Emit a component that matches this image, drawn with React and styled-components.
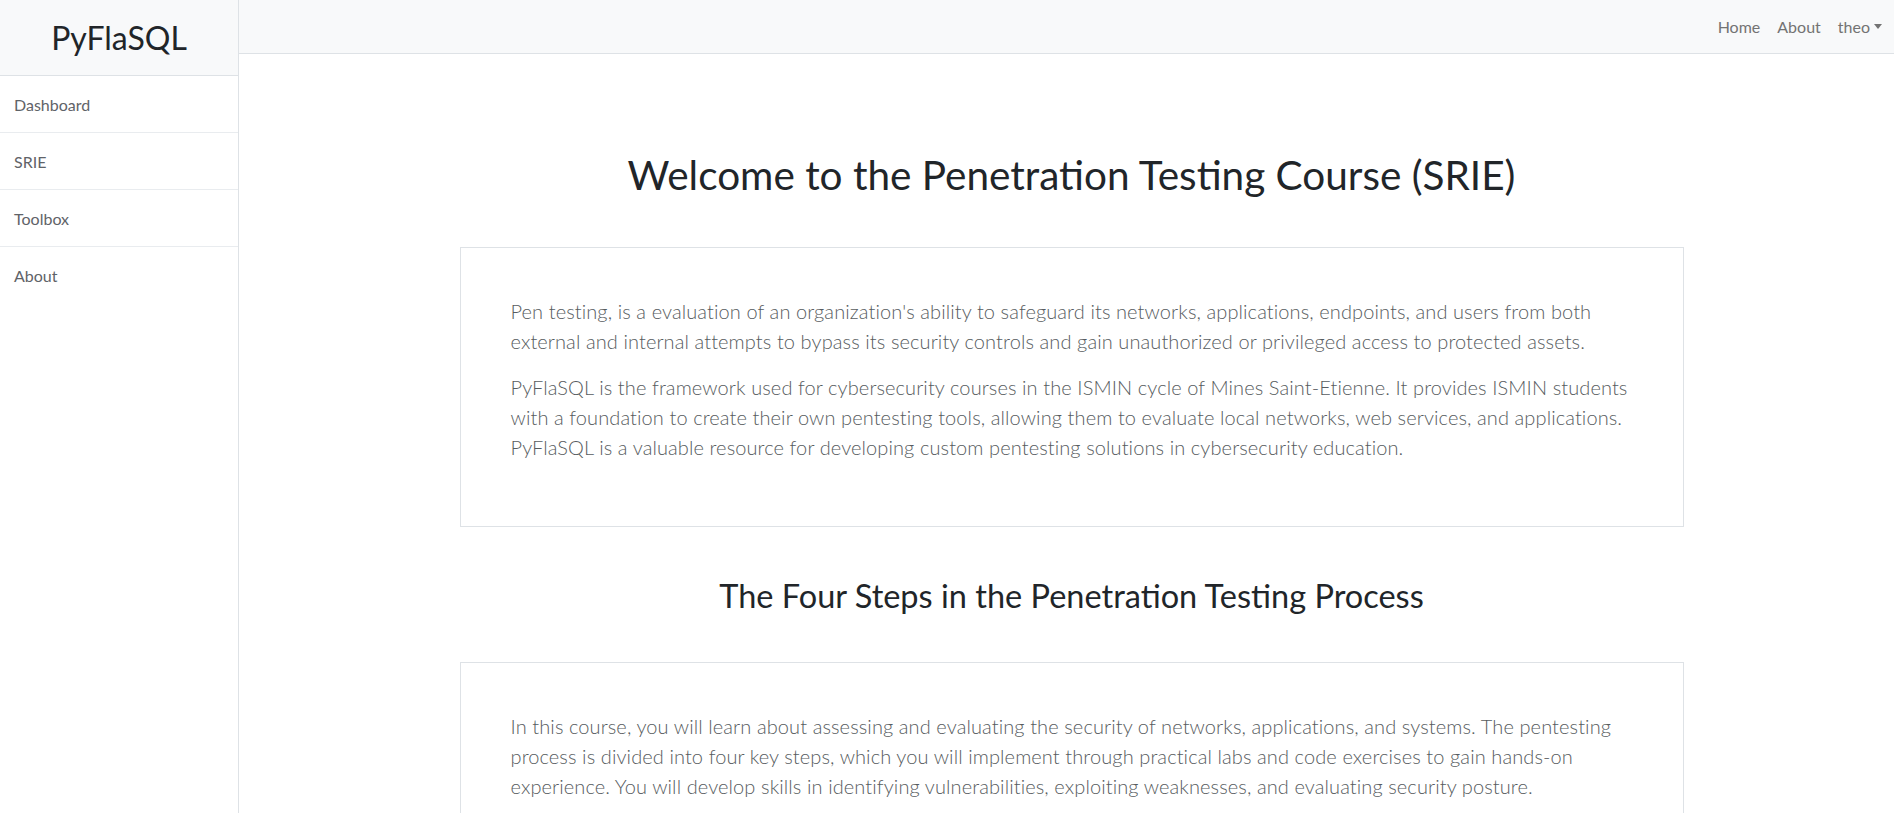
import React from "react";
import styled, { createGlobalStyle } from "styled-components";

const GlobalStyle = createGlobalStyle`
  * {
    box-sizing: border-box;
  }
  body {
    margin: 0;
    background: #ffffff;
    color: #212529;
    font-family: "Lato", "Noto Sans", sans-serif;
  }
`;

const sideLinks = ["Dashboard", "SRIE", "Toolbox", "About"];
const topLinks = ["Home", "About"];

const App = () => {
  return (
    <>
      <GlobalStyle />
      <Page>
        <Sidebar>
          <Brand>PyFlaSQL</Brand>
          {sideLinks.map((label) => (
            <SideItem key={label} href="#">
              {label}
            </SideItem>
          ))}
        </Sidebar>
        <Right>
          <Navbar>
            {topLinks.map((label) => (
              <NavLink key={label} href="#">
                {label}
              </NavLink>
            ))}
            <NavLink href="#">
              theo <Caret />
            </NavLink>
          </Navbar>
          <Main>
            <Title>Welcome to the Penetration Testing Course (SRIE)</Title>
            <Card>
              <Text>
                Pen testing, is a evaluation of an organization's ability to safeguard its
                networks, applications, endpoints, and users from both external and internal
                attempts to bypass its security controls and gain unauthorized or privileged
                access to protected assets.
              </Text>
              <Text>
                PyFlaSQL is the framework used for cybersecurity courses in the ISMIN cycle of
                Mines Saint-Etienne. It provides ISMIN students with a foundation to create their
                own pentesting tools, allowing them to evaluate local networks, web services, and
                applications. PyFlaSQL is a valuable resource for developing custom pentesting
                solutions in cybersecurity education.
              </Text>
            </Card>
            <Subtitle>The Four Steps in the Penetration Testing Process</Subtitle>
            <Card>
              <Text>
                In this course, you will learn about assessing and evaluating the security of
                networks, applications, and systems. The pentesting process is divided into four
                key steps, which you will implement through practical labs and code exercises to
                gain hands-on experience. You will develop skills in identifying vulnerabilities,
                exploiting weaknesses, and evaluating security posture.
              </Text>
            </Card>
          </Main>
        </Right>
      </Page>
    </>
  );
};

const Page = styled.div`
  display: flex;
  height: 813px;
  overflow: hidden;
`;

const Sidebar = styled.nav`
  width: 239px;
  flex-shrink: 0;
  border-right: 1px solid #dee2e6;
  display: flex;
  flex-direction: column;
`;

const Brand = styled.div`
  height: 76px;
  display: flex;
  align-items: center;
  justify-content: center;
  background: #f8f9fa;
  border-bottom: 1px solid #dee2e6;
  font-size: 32px;
  color: #212529;
`;

const SideItem = styled.a`
  height: 57px;
  display: flex;
  align-items: center;
  padding-left: 14px;
  border-bottom: 1px solid #e9ecef;
  font-size: 16px;
  color: #5f6368;
  text-decoration: none;
  &:last-child {
    border-bottom: none;
  }
`;

const Right = styled.div`
  flex: 1;
  display: flex;
  flex-direction: column;
  min-width: 0;
`;

const Navbar = styled.header`
  height: 54px;
  flex-shrink: 0;
  display: flex;
  align-items: center;
  justify-content: flex-end;
  gap: 17px;
  padding-right: 12px;
  background: #f8f9fa;
  border-bottom: 1px solid #dee2e6;
`;

const NavLink = styled.a`
  font-size: 16px;
  color: #737373;
  text-decoration: none;
  display: flex;
  align-items: center;
  gap: 4px;
`;

const Caret = styled.span`
  display: inline-block;
  width: 0;
  height: 0;
  border-left: 4px solid transparent;
  border-right: 4px solid transparent;
  border-top: 5px solid #737373;
`;

const Main = styled.main`
  display: flex;
  flex-direction: column;
  align-items: center;
  padding-left: 10px;
`;

const Title = styled.h1`
  margin: 97px 0 47px;
  font-size: 40.5px;
  font-weight: 400;
  line-height: 1.2;
  color: #212529;
`;

const Subtitle = styled.h2`
  margin: 49px 0 47px;
  font-size: 32.5px;
  font-weight: 400;
  line-height: 1.2;
  color: #212529;
`;

const Card = styled.section`
  width: 1224px;
  flex-shrink: 0;
  border: 1px solid #dee2e6;
  padding: 48px 50px 48px;
`;

const Text = styled.p`
  margin: 0 0 16px;
  font-size: 20px;
  font-weight: 300;
  line-height: 30px;
  letter-spacing: 0.1px;
  color: #575c60;
`;

export default App;
